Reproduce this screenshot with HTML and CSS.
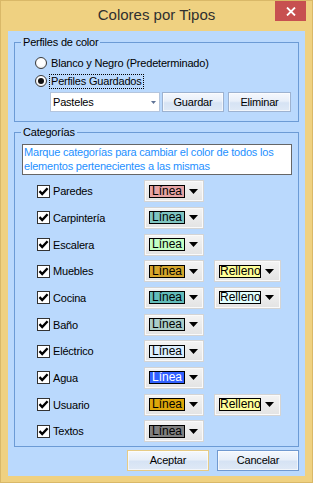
FILE: index.html
```html
<!DOCTYPE html>
<html lang="es">
<head>
  <meta charset="UTF-8">
  <title>Colores por Tipos</title>
  <link rel="stylesheet" href="styles.css">
</head>
<body>
  <div class="window">
    <div class="titlebar">
      <span class="title">Colores por Tipos</span>
      <span class="close">
        <svg width="10" height="9" viewBox="0 0 10 9"><path d="M1 0.5 L9 8.5 M9 0.5 L1 8.5" stroke="#fff" stroke-width="1.8"/></svg>
      </span>
    </div>

    <div class="client">
      <!-- Perfiles -->
      <fieldset class="group profiles">
        <legend>Perfiles de color</legend>
        <div class="opt"><span class="radio"></span><span class="opt-text">Blanco y Negro (Predeterminado)</span></div>
        <div class="opt"><span class="radio on"></span><span class="focus">Perfiles Guardados</span></div>
        <div class="profile-row">
          <div class="combo">
            <span>Pasteles</span>
            <svg width="5" height="3" viewBox="0 0 5 3"><path d="M0 0 H5 L2.5 3 Z" fill="#5f7396"/></svg>
          </div>
          <button class="btn save">Guardar</button>
          <button class="btn remove">Eliminar</button>
        </div>
      </fieldset>

      <!-- Categorias -->
      <fieldset class="group cats">
        <legend>Categorías</legend>
        <div class="info">Marque categorías para cambiar el color de todos los<br>elementos pertenecientes a las mismas</div>
        <div class="cat-list" id="catList"></div>
      </fieldset>

      <div class="actions">
        <button class="btn default">Aceptar</button>
        <button class="btn">Cancelar</button>
      </div>
    </div>
  </div>

  <script>
    // categorias: nombre, color de linea, color de relleno
    const cats = [
      ['Paredes', '#e7a3a3'],
      ['Carpintería', '#7fc5c1'],
      ['Escalera', '#c4ffc4'],
      ['Muebles', '#d6a62c', '#ffff99'],
      ['Cocina', '#62bcba', '#e2ffff'],
      ['Baño', '#abcdc8'],
      ['Eléctrico', '#dcefff'],
      ['Agua', '#3060ff'],
      ['Usuario', '#dea70a', '#ffff99'],
      ['Textos', '#808080']
    ];

    const arrow = '<svg width="9" height="5" viewBox="0 0 9 5"><path d="M0 0 H9 L4.5 5 Z" fill="#000"/></svg>';
    const check = '<span class="check"><svg width="11" height="11" viewBox="0 0 11 11"><path d="M1.5 5.2 L4.2 8 L9.6 2.2" fill="none" stroke="#000" stroke-width="2.4"/></svg></span>';

    const list = document.getElementById('catList');
    cats.forEach(function(c) {
      let html = check + '<span class="cat-name">' + c[0] + '</span>';
      const dark = c[0] === 'Agua' ? ' dark' : '';
      html += '<span class="pick"><span class="swatch' + dark + '" style="background:' + c[1] + '">Línea</span>' + arrow + '</span>';
      if (c[2]) {
        html += '<span class="pick fill"><span class="swatch" style="background:' + c[2] + '">Relleno</span>' + arrow + '</span>';
      }
      const row = document.createElement('div');
      row.className = 'cat';
      row.innerHTML = html;
      list.appendChild(row);
    });
  </script>
</body>
</html>
```

FILE: styles.css
```css
* { box-sizing: border-box; }
body { margin: 0; font-family: "Liberation Sans", Arial, sans-serif; font-size: 11px; letter-spacing: -0.2px; color: #000; }

.window { width: 313px; height: 483px; background: #efd181; border: 1px solid #d9b868; display: flex; flex-direction: column; }
.titlebar { height: 30px; display: grid; grid-template-columns: 1fr auto 1fr; }
.title { grid-column: 2; font-size: 15px; letter-spacing: 0; line-height: 28px; color: #2f2f2f; }
.close { grid-column: 3; justify-self: end; width: 31px; height: 20px; margin-right: 6px; background: #c75050; display: flex; align-items: center; justify-content: center; }

.client { flex: 1; margin: 0 7px 6px; background: #bad9fd; display: flex; flex-direction: column; }

.group { margin: 5px 6px 0; padding: 5px 6px 9px; border: 1px solid #6c9bd5; min-width: 0; }
.group legend { padding: 0 2px; line-height: 13px; }
.cats { margin-top: 4px; padding-bottom: 1px; }

.opt { display: flex; align-items: center; height: 18px; margin-left: 14px; }
.radio { width: 12px; height: 12px; border-radius: 50%; border: 1px solid #3a3a3a; background: radial-gradient(circle at 50% 40%, #fff 45%, #dcdcdc 100%); display: flex; align-items: center; justify-content: center; }
.radio.on::after { content: ""; width: 6px; height: 6px; border-radius: 50%; background: #111; }
.opt-text { margin-left: 4px; }
.focus { margin-left: 2px; padding: 0 1px; border: 1px dotted #000; line-height: 13px; }

.profile-row { display: flex; height: 20px; margin: 2px 0 0 29px; }
.combo { width: 110px; height: 20px; background: #fff; border: 1px solid #b4c5dd; display: flex; align-items: center; padding-left: 2px; }
.combo svg { margin-left: auto; margin-right: 3px; }

.btn { font: inherit; letter-spacing: inherit; color: #000; height: 20px; padding: 0; border: 1px solid #9db2d0; border-radius: 0;
  background: linear-gradient(#f5f8fd 0%, #e8eff9 45%, #d6e3f4 55%, #dfe9f6 100%); box-shadow: inset 0 0 0 1px rgba(255,255,255,0.6); }
.save { width: 62px; margin-left: 2px; }
.remove { width: 63px; margin-left: 4px; }

.info { margin-left: 1px; padding: 0 1px 1px; border: 1px solid #666; background: #fff; color: #1e90ff; line-height: 14px; white-space: nowrap; }

.cat-list { margin-top: 3px; display: grid; grid-auto-rows: 26.67px; }
.cat { display: flex; align-items: center; }
.check { margin-left: 16px; width: 13px; height: 13px; border: 1px solid #333; background: #fff; display: flex; align-items: center; justify-content: center; }
.cat-name { margin-left: 3px; width: 91px; }
.pick { width: 60px; height: 22px; padding-left: 4px; display: flex; align-items: center; gap: 4px; border: 1px solid #d4d4d4;
  background: linear-gradient(#f4f4f4, #e3e3e3); box-shadow: inset 0 0 0 1px #fafafa; }
.pick.fill { width: 67px; margin-left: 10px; }
.swatch { width: 36px; height: 13px; border: 1px solid #000; font-size: 12px; letter-spacing: 0; line-height: 11px; text-align: center; }
.fill .swatch { width: 42px; }
.swatch.dark { color: #fff; }

.actions { display: flex; justify-content: flex-end; gap: 8px; margin: 3px 6px 0 0; }
.actions .btn { width: 82px; height: 21px; border-color: #7099d0; }
.actions .default { border-color: #e6cb86; }
```
